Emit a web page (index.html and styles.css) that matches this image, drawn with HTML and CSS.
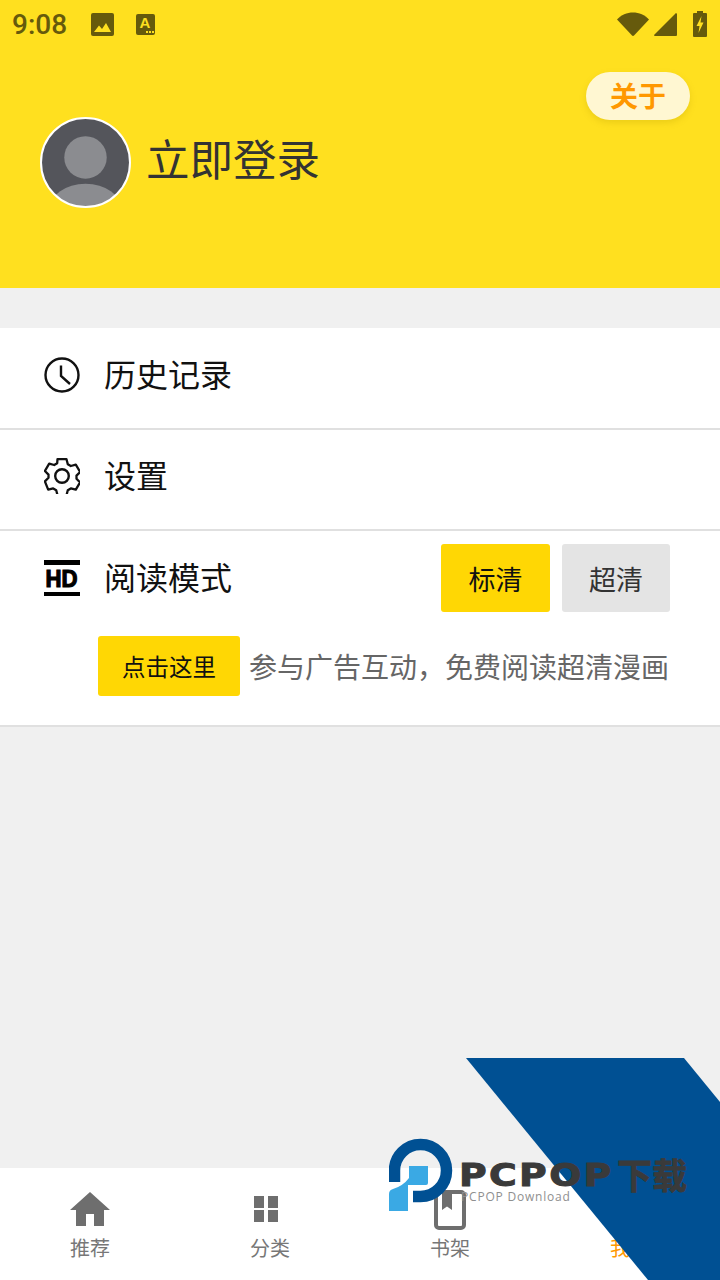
FILE: index.html
```html
<!DOCTYPE html>
<html lang="zh">
<head>
<meta charset="utf-8">
<title>我的</title>
<link rel="stylesheet" href="styles.css">
</head>
<body>
<div class="page">
  <header class="header">
    <div class="status">
      <span class="time">9:08</span>
      <svg class="st-img" viewBox="0 0 23 23"><rect width="23" height="23" rx="2" fill="#665a0c"/><path d="M3 19l5-6.500 3 3.500 4-6 5 9z" fill="#ffe01f"/></svg>
      <svg class="st-a" viewBox="0 0 19 21"><rect width="19" height="21" rx="2" fill="#665a0c"/><text x="9" y="14" text-anchor="middle" class="st-a-letter">A</text><path d="M10 17h2v2h-2zM13 17h2v2h-2zM16 17h2v2h-2z" fill="#ffe01f"/></svg>
      <span class="spacer"></span>
      <svg class="st-wifi" viewBox="0 0 32 24"><path d="M0 7.500C4 3 10 .5 16 .5s12 2.500 16 7L17 23.500a1.400 1.400 0 0 1-2 0z" fill="#665a0c"/></svg>
      <svg class="st-signal" viewBox="0 0 23 23"><path d="M0 22L21 1a1 1 0 0 1 2 .5V22a1 1 0 0 1-1 1H1a1 1 0 0 1-1-1z" fill="#665a0c"/></svg>
      <svg class="st-batt" viewBox="0 0 14 26"><path d="M4 0h6v2h3a1 1 0 0 1 1 1v22a1 1 0 0 1-1 1H1a1 1 0 0 1-1-1V3a1 1 0 0 1 1-1h3z" fill="#665a0c"/><path d="M8.500 5L3.500 15h3l-1 7 5-10.500h-3z" fill="#ffe01f"/></svg>
    </div>
    <div class="about-row"><button class="about">关于</button></div>
    <div class="user">
      <svg class="avatar" viewBox="0 0 90 90"><defs><clipPath id="av"><circle cx="45" cy="45" r="43.500"/></clipPath></defs><circle cx="45" cy="45" r="44" fill="#54555b"/><g clip-path="url(#av)" fill="#8b8c90"><circle cx="45" cy="40" r="21"/><ellipse cx="45" cy="92" rx="36" ry="26"/></g><circle cx="45" cy="45" r="44" fill="none" stroke="#fff" stroke-width="2"/></svg>
      <span class="login">立即登录</span>
    </div>
  </header>

  <main class="list">
    <div class="row row-first">
      <svg class="ico" viewBox="0 0 36 36"><circle cx="18" cy="18" r="16.500" fill="none" stroke="#111" stroke-width="2.400"/><path d="M17 8.500V19l9 8" fill="none" stroke="#111" stroke-width="2.400"/></svg>
      <span class="label">历史记录</span>
    </div>
    <div class="row">
      <svg class="ico" viewBox="0 0 36 36"><path d="M13.500 1.200h9l1.300 5 3 1.800 5-1.300 4.300 7.300-3.600 3.600v3.200l3.600 3.600-4.300 7.300-5-1.300-3 1.800-1.300 5h-9l-1.300-5-3-1.800-5 1.300L.900 23.400l3.600-3.600v-3.200L.900 13l4.300-7.300 5 1.300 3-1.800z" fill="none" stroke="#111" stroke-width="2.300" stroke-linejoin="round"/><circle cx="18" cy="18" r="6.800" fill="none" stroke="#111" stroke-width="2.400"/></svg>
      <span class="label">设置</span>
    </div>
    <div class="row-mode">
      <div class="mode-top">
        <svg class="ico" viewBox="0 0 36 36"><rect width="36" height="5" fill="#000"/><rect y="32" width="36" height="4.500" fill="#000"/><text x="1.500" y="27" textLength="32" lengthAdjust="spacingAndGlyphs" class="hd">HD</text></svg>
        <span class="label">阅读模式</span>
        <span class="spacer"></span>
        <span class="q q-on">标清</span>
        <span class="q q-off">超清</span>
      </div>
      <div class="mode-bottom">
        <span class="tap">点击这里</span>
        <span class="tip">参与广告互动，免费阅读超清漫画</span>
      </div>
    </div>
  </main>

  <nav class="nav">
    <div class="tab">
      <svg class="tab-ico" viewBox="0 0 40 42"><path d="M20 2L40 20h-6v16H24V24h-8v12H6V20H0z" fill="#6e6e6e"/></svg>
      <span>推荐</span>
    </div>
    <div class="tab">
      <svg class="tab-ico" viewBox="0 0 40 42"><path d="M4 6h10v12H4zM18 6h10v12H18zM4 20h10v12H4zM18 20h10v12H18z" fill="#6e6e6e"/></svg>
      <span>分类</span>
    </div>
    <div class="tab">
      <svg class="tab-ico" viewBox="0 0 40 42"><rect x="6" y="2" width="28" height="36" rx="3" fill="none" stroke="#6e6e6e" stroke-width="4"/><path d="M12 2h10v18l-5-3.500-5 3.500z" fill="#6e6e6e"/></svg>
      <span>书架</span>
    </div>
    <div class="tab tab-on">
      <svg class="tab-ico" viewBox="0 0 40 42"></svg>
      <span>我的</span>
    </div>
  </nav>

  <div class="mark" aria-label="PCPOP下载">
    <svg class="mark-band" viewBox="0 0 254 222"><path d="M0 0H218L254 44V222H182z" fill="#005093"/></svg>
    <svg class="mark-logo" viewBox="0 0 64 74"><path d="M5.500 44V32.500a26 26 0 1 1 26 26H24" fill="none" stroke="#005093" stroke-width="11.500"/><path d="M20 28H39V45Q39 47 37 47H19V73H0V56Q0 52 4 51Q14 48 20 40Z" fill="#3aa9e4"/></svg>
    <span class="mark-latin">PCPOP</span>
    <span class="mark-cjk">下载</span>
    <span class="mark-sub">PCPOP Download</span>
  </div>
</div>
</body>
</html>
```

FILE: styles.css
```css
* { box-sizing: border-box; }
html, body { margin: 0; padding: 0; }
body { font-family: "Noto Sans CJK SC", "Noto Sans", sans-serif; }
.page { position: relative; width: 720px; height: 1280px; overflow: hidden; background: #f0f0f0; display: flex; flex-direction: column; }
.spacer { flex: 1; }

.header { height: 288px; background: #ffe01f; flex: none; }
.status { height: 48px; display: flex; align-items: center; padding: 0 13px 0 12px; }
.time { font-family: Roboto, sans-serif; font-weight: 500; font-size: 28px; color: #665a0c; width: 79px; }
.st-img { width: 23px; height: 23px; margin-right: 22px; }
.st-a { width: 19px; height: 21px; }
.st-a-letter { font: 700 15px "Liberation Sans", sans-serif; fill: #ffe01f; }
.st-wifi { width: 32px; height: 24px; margin-right: 5px; }
.st-signal { width: 23px; height: 23px; margin-right: 16px; }
.st-batt { width: 14px; height: 26px; }

.about-row { display: flex; justify-content: flex-end; padding: 24px 30px 0 0; }
.about { width: 104px; height: 48px; border: 0; border-radius: 24px; background: #fff7d2; color: #ff9800; font: 700 28px "Noto Sans CJK SC", sans-serif; box-shadow: 0 3px 6px rgba(180, 150, 0, .25); padding: 0 0 2px; }
.user { display: flex; align-items: center; padding: 0 0 0 40px; margin-top: -3px; }
.avatar { width: 91px; height: 91px; flex: none; }
.login { font-size: 43.500px; color: #333; margin-left: 15px; line-height: 60px; padding-bottom: 10px; }

.list { margin-top: 40px; background: #fff; flex: none; }
.row { height: 101px; display: flex; align-items: center; padding: 0 0 7px 44px; border-bottom: 2px solid #e0e0e0; }
.row-first { height: 102px; padding-bottom: 6px; }
.ico { width: 36px; height: 36px; flex: none; }
.label { font-size: 32px; color: #111; margin-left: 24px; line-height: 44px; padding-bottom: 5px; }
.row-mode { height: 196px; padding-top: 13px; border-bottom: 2px solid #e0e0e0; }
.mode-top { display: flex; align-items: center; height: 68px; padding: 0 50px 0 44px; }
.hd { font: 700 24px "Liberation Sans", sans-serif; fill: #000; stroke: #000; stroke-width: 1.200px; }
.q { height: 68px; display: flex; align-items: center; justify-content: center; border-radius: 3px; font-size: 27px; }
.q-on { width: 109px; background: #ffd704; color: #111; margin-right: 12px; }
.q-off { width: 108px; background: #e4e4e4; color: #333; }
.mode-bottom { display: flex; align-items: center; height: 60px; margin-top: 24px; padding-left: 98px; }
.tap { width: 142px; height: 60px; display: flex; align-items: center; justify-content: center; background: #ffd704; border-radius: 3px; font-size: 23.500px; color: #111; }
.tip { margin-left: 9px; font-size: 28px; color: #666; white-space: nowrap; }

.nav { position: absolute; left: 0; right: 0; bottom: 0; height: 112px; background: #fff; display: grid; grid-template-columns: repeat(4, 1fr); }
.tab { display: flex; flex-direction: column; align-items: center; padding-top: 22px; font-size: 20px; line-height: 28px; color: #777; }
.tab-ico { width: 40px; height: 42px; margin-bottom: 2px; }
.tab-on { color: #ff9800; }

.mark-band { position: absolute; left: 466px; top: 1058px; width: 254px; height: 222px; }
.mark-logo { position: absolute; left: 389px; top: 1138px; width: 64px; height: 74px; }
.mark-latin { position: absolute; left: 459px; top: 1162px; font: 700 32px/26px "DejaVu Sans", sans-serif; letter-spacing: 2px; color: #3a3a3a; white-space: nowrap; transform: scaleX(1.18); transform-origin: left center; -webkit-text-stroke: 1px #3a3a3a; }
.mark-cjk { position: absolute; left: 617px; top: 1150px; font: 700 35px/48px "Noto Sans CJK SC", sans-serif; color: #3a3a3a; white-space: nowrap; -webkit-text-stroke: .8px #3a3a3a; }
.mark-sub { position: absolute; left: 461px; top: 1190px; font: 400 12px/14px "Open Sans", sans-serif; letter-spacing: .8px; color: #8f8f8f; white-space: nowrap; }
```
